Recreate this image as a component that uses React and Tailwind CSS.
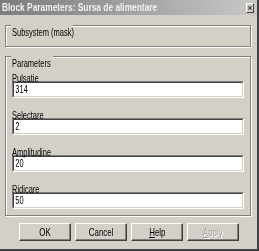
import { useState } from "react";

const FONT = "font-['Liberation_Sans',Arial,sans-serif]";

function Squeezed({ children, className = "" }) {
  return (
    <span className={`inline-block whitespace-nowrap scale-x-[0.68] origin-left ${className}`}>
      {children}
    </span>
  );
}

function GroupBox({ label, labelWidth, className = "", children }) {
  return (
    <div
      className={`relative mx-[5px] w-[246px] shrink-0 border border-[#808080] shadow-[inset_1px_1px_0_#fff,1px_1px_0_#fff] ${className}`}
    >
      {/* caption sits over the top edge */}
      <div
        className="absolute -top-[7px] left-[5px] z-10 h-[13px] px-[1px] bg-[#d4d0c8]"
        style={{ width: labelWidth }}
      >
        <Squeezed className="text-[11px] leading-[13px] text-black">{label}</Squeezed>
      </div>
      {children}
    </div>
  );
}

function Field({ label, value, onChange }) {
  return (
    <div className="flex flex-col shrink-0">
      <div className="h-[20px] pl-[6px] pt-[4px]">
        <Squeezed className="text-[11px] leading-[13px] text-black">{label}</Squeezed>
      </div>
      <div className="mx-[6px] h-[17px] shrink-0 border border-t-[#808080] border-l-[#808080] border-b-white border-r-white">
        <div className="h-[15px] border border-t-[#404040] border-l-[#404040] border-b-[#d4d0c8] border-r-[#d4d0c8] bg-white overflow-hidden">
          <input
            value={value}
            onChange={(e) => onChange(e.target.value)}
            className="block w-[147%] h-[13px] p-0 pl-[2px] text-[11px] leading-[13px] text-black outline-none bg-transparent origin-left scale-x-[0.68]"
          />
        </div>
      </div>
    </div>
  );
}

function Button({ children, disabled }) {
  return (
    <button
      className={`w-[52px] h-[18px] bg-[#d4d0c8] border border-t-white border-l-white border-b-[#404040] border-r-[#404040] shadow-[inset_-1px_-1px_0_#808080] flex items-center justify-center text-[11px] leading-[13px] ${
        disabled ? "text-[#a0a0a0] [text-shadow:1px_1px_0_#fff]" : "text-black"
      }`}
    >
      <span className="inline-block whitespace-nowrap scale-x-[0.72]">{children}</span>
    </button>
  );
}

export default function App() {
  const [params, setParams] = useState({
    pulsatie: "314",
    selectare: "2",
    amplitudine: "20",
    ridicare: "50",
  });

  function update(key) {
    return (v) => setParams({ ...params, [key]: v });
  }

  return (
    <div
      className={`w-[259px] h-[251px] overflow-hidden bg-[#d4d0c8] border-r-2 border-b-2 border-r-[#404040] border-b-[#404040] flex flex-col ${FONT}`}
    >
      {/* title bar */}
      <div className="h-[15px] shrink-0 flex items-center justify-between bg-gradient-to-r from-[#7c7c7c] to-[#c8c8c8] pl-[2px] pr-[3px]">
        <span className="inline-block whitespace-nowrap scale-x-[0.76] origin-left text-[11px] leading-[13px] font-bold text-[#f0f0f0]">
          Block Parameters: Sursa de alimentare
        </span>
        <div className="w-[8px] h-[10px] bg-[#d4d0c8] border border-t-white border-l-white border-b-[#404040] border-r-[#404040] flex items-center justify-center text-[9px] leading-[8px] text-black">
          ×
        </div>
      </div>

      <GroupBox label="Subsystem (mask)" labelWidth="62px" className="mt-[10px] h-[22px]" />

      <GroupBox label="Parameters" labelWidth="42px" className="mt-[9px] h-[160px]">
        <div className="flex flex-col pt-[4px]">
          <Field label="Pulsatie" value={params.pulsatie} onChange={update("pulsatie")} />
          <Field label="Selectare" value={params.selectare} onChange={update("selectare")} />
          <Field label="Amplitudine" value={params.amplitudine} onChange={update("amplitudine")} />
          <Field label="Ridicare" value={params.ridicare} onChange={update("ridicare")} />
        </div>
      </GroupBox>

      <div className="flex gap-[4px] pl-[19px] mt-[7px]">
        <Button>OK</Button>
        <Button>Cancel</Button>
        <Button>
          <span className="underline">H</span>elp
        </Button>
        <Button disabled>
          <span className="underline">A</span>pply
        </Button>
      </div>
    </div>
  );
}
